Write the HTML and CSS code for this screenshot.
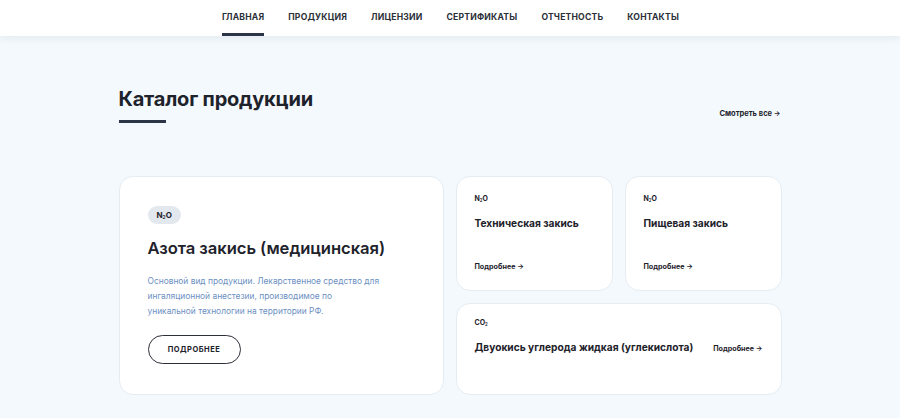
FILE: index.html
```html
<!DOCTYPE html>
<html lang="ru">
<head>
    <meta charset="UTF-8">
    <meta name="viewport" content="width=device-width, initial-scale=1.0">
    <title>Каталог продукции</title>
    <link rel="stylesheet" href="styles.css">
</head>
<body>
    <header class="header">
        <nav class="nav">
            <a class="nav-link active" href="#">Главная</a>
            <a class="nav-link" href="#">Продукция</a>
            <a class="nav-link" href="#">Лицензии</a>
            <a class="nav-link" href="#">Сертификаты</a>
            <a class="nav-link" href="#">Отчетность</a>
            <a class="nav-link" href="#">Контакты</a>
        </nav>
    </header>

    <main class="catalog">
        <div class="catalog-head">
            <h2 class="catalog-title">Каталог продукции</h2>
            <a class="see-all" href="#">Смотреть все <span class="arrow">→</span></a>
        </div>

        <div class="catalog-grid">
            <div class="card card-main">
                <span class="badge">N<sub>2</sub>O</span>
                <h3 class="main-title">Азота закись (медицинская)</h3>
                <p class="main-text">Основной вид продукции. Лекарственное средство для ингаляционной анестезии, производимое по<br>уникальной технологии на территории РФ.</p>
                <a class="btn-more" href="#">Подробнее</a>
            </div>

            <div class="card card-small">
                <span class="formula">N<sub>2</sub>O</span>
                <h3 class="card-title">Техническая закись</h3>
                <a class="more-link" href="#">Подробнее <span class="arrow">→</span></a>
            </div>

            <div class="card card-small">
                <span class="formula">N<sub>2</sub>O</span>
                <h3 class="card-title">Пищевая закись</h3>
                <a class="more-link" href="#">Подробнее <span class="arrow">→</span></a>
            </div>

            <div class="card card-wide">
                <span class="formula">CO<sub>2</sub></span>
                <div class="wide-row">
                    <h3 class="card-title">Двуокись углерода жидкая (углекислота)</h3>
                    <a class="more-link" href="#">Подробнее <span class="arrow">→</span></a>
                </div>
            </div>
        </div>
    </main>
</body>
</html>
```

FILE: styles.css
```css
:root {
    --text-dark: #1e222b;
    --nav-color: #2b2f38;
    --navy: #2c3547;
    --page-bg: #f3f9fd;
    --card-bg: #ffffff;
    --card-border: #e5edf3;
    --badge-bg: #e3e7ee;
    --muted-blue: #6c8fc2;
}

* {
    margin: 0;
    padding: 0;
    box-sizing: border-box;
    font-family: Inter, 'Noto Sans', sans-serif;
}

a {
    text-decoration: none;
    color: inherit;
}

body {
    background-color: var(--page-bg);
    color: var(--text-dark);
    height: 100vh;
    overflow: hidden;
}

.header {
    background-color: #fff;
    height: 36px;
    box-shadow: 0 2px 8px rgba(40, 60, 80, 0.08);
    display: flex;
    justify-content: center;
    position: relative;
}

.nav {
    display: flex;
    gap: 24px;
    padding-left: 1px;
}

.nav-link {
    font-size: 8.6px;
    font-weight: 700;
    text-transform: uppercase;
    letter-spacing: 0.2px;
    color: var(--nav-color);
    padding-top: 12px;
    height: 36px;
    border-bottom: 3px solid transparent;
}

.nav-link.active {
    border-bottom-color: var(--navy);
}

.catalog {
    width: 663px;
    margin: 0 auto;
    padding-top: 50px;
}

.catalog-head {
    display: flex;
    justify-content: space-between;
    align-items: flex-end;
}

.catalog-title {
    font-size: 20px;
    font-weight: 700;
    letter-spacing: -0.2px;
    line-height: 26px;
    padding-bottom: 11px;
    position: relative;
}

.catalog-title:after {
    content: '';
    position: absolute;
    left: 0;
    bottom: 0;
    width: 47px;
    height: 3px;
    background-color: var(--navy);
}

.see-all {
    font-size: 7.5px;
    font-weight: 700;
    color: var(--text-dark);
    margin-bottom: 5px;
    margin-right: 1px;
}

.arrow {
    font-size: 7px;
}

.catalog-grid {
    display: grid;
    grid-template-columns: 325px 157px 157px;
    grid-template-rows: 115px 92px;
    gap: 12px;
    margin-top: 53px;
}

.card {
    background-color: var(--card-bg);
    border: 1px solid var(--card-border);
    border-radius: 14px;
}

sub {
    font-size: 0.6em;
    vertical-align: -0.25em;
    line-height: 0;
}

.card-main {
    grid-row: 1 / span 2;
    padding: 29px 28px 0 28px;
    display: flex;
    flex-direction: column;
    align-items: flex-start;
}

.badge {
    background-color: var(--badge-bg);
    border-radius: 10px;
    font-size: 8px;
    font-weight: 700;
    padding: 4px 9px;
    line-height: 10px;
}

.main-title {
    font-size: 16.6px;
    font-weight: 600;
    margin-top: 13px;
    line-height: 22px;
    letter-spacing: -0.05px;
}

.main-text {
    font-size: 8.4px;
    line-height: 15px;
    color: var(--muted-blue);
    margin-top: 15px;
    max-width: 240px;
}

.btn-more {
    margin-top: 16px;
    border: 1.5px solid var(--nav-color);
    border-radius: 15px;
    width: 93px;
    height: 29px;
    display: flex;
    align-items: center;
    justify-content: center;
    font-size: 7.5px;
    font-weight: 700;
    letter-spacing: 0.5px;
    text-transform: uppercase;
}

.card-small {
    padding: 17px 18px 0 18px;
    display: flex;
    flex-direction: column;
}

.formula {
    display: block;
    font-size: 7px;
    font-weight: 700;
    line-height: 10px;
}

.card-title {
    font-size: 10.2px;
    font-weight: 700;
    line-height: 14px;
    margin-top: 12px;
}

.more-link {
    font-size: 7.2px;
    font-weight: 700;
    margin-top: 32px;
}

.card-wide {
    grid-column: 2 / span 2;
    padding: 14px 18px 0 18px;
}

.wide-row {
    display: flex;
    justify-content: space-between;
    align-items: center;
    margin-top: 12px;
}

.wide-row .card-title {
    margin-top: 0;
}

.wide-row .more-link {
    margin-top: 2px;
}
```
